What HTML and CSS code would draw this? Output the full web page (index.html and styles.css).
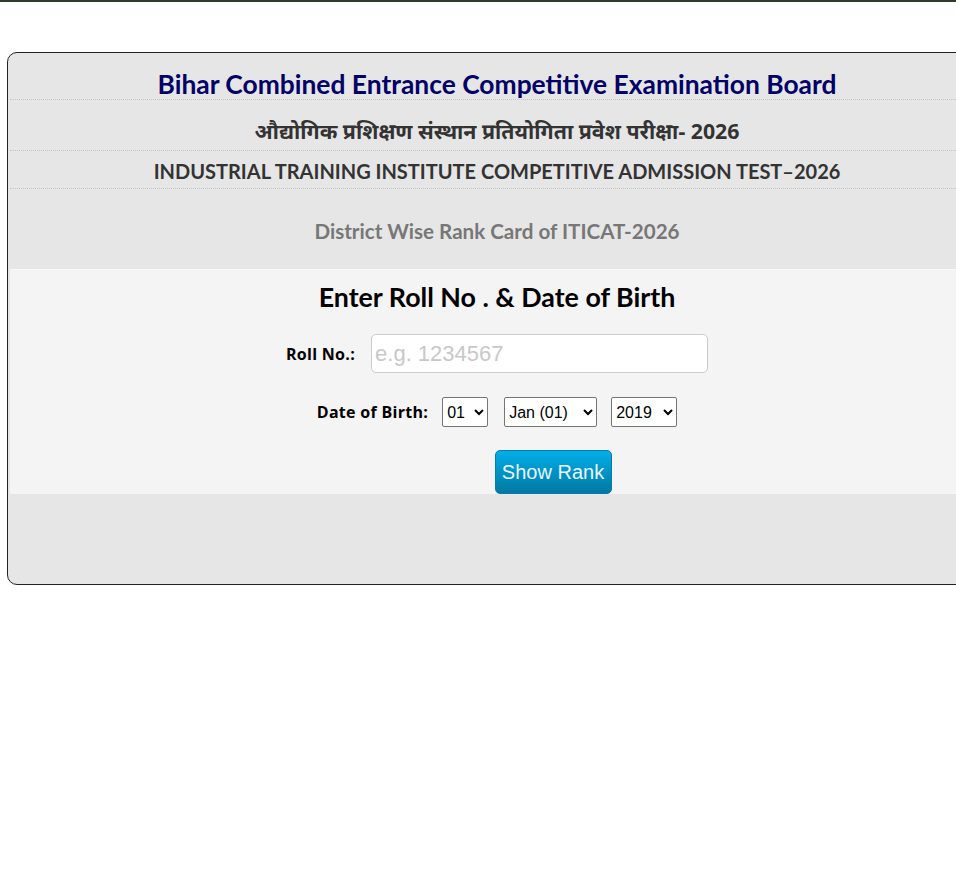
FILE: index.html
```html
<!DOCTYPE html>
<html lang="en">
<head>
    <meta charset="UTF-8">
    <meta name="viewport" content="width=device-width, initial-scale=1.0">
    <title>ITICAT-2026 District Wise Rank Card</title>
    <link rel="stylesheet" href="styles.css">
</head>
<body>
    <div class="topbar"></div>

    <div class="card">
        <div class="title-row board">Bihar Combined Entrance Competitive Examination Board</div>
        <div class="title-row hindi">औद्योगिक प्रशिक्षण संस्थान प्रतियोगिता प्रवेश परीक्षा- 2026</div>
        <div class="title-row exam">INDUSTRIAL TRAINING INSTITUTE COMPETITIVE ADMISSION TEST–2026</div>
        <div class="title-row sub">District Wise Rank Card of ITICAT-2026</div>

        <div class="form-panel">
            <h2>Enter Roll No . &amp; Date of Birth</h2>

            <div class="form-row">
                <label for="rollNo">Roll No.:</label>
                <input type="text" id="rollNo" class="roll-input" placeholder="e.g. 1234567">
            </div>

            <div class="form-row dob-row">
                <label>Date of Birth:</label>
                <select class="sel sel-day">
                    <option>01</option>
                </select>
                <select class="sel sel-month">
                    <option>Jan (01)</option>
                </select>
                <select class="sel sel-year">
                    <option>2019</option>
                </select>
            </div>

            <div class="btn-row">
                <button class="btn-rank">Show Rank</button>
            </div>
        </div>
    </div>
</body>
</html>
```

FILE: styles.css
```css
body {
    margin: 0;
    padding: 0;
    background-color: #fff;
    font-family: Lato, 'Open Sans', sans-serif;
    overflow: hidden;
}
.topbar {
    height: 2px;
    background-color: #2e3c2b;
}
.card {
    box-sizing: border-box;
    width: 980px;
    margin: 50px 0 0 7px;
    border: 1px solid #222;
    border-radius: 10px;
    background-color: #e6e6e6;
    padding-bottom: 90px;
}
.title-row {
    text-align: center;
    font-weight: bold;
    border-bottom: 1px dotted #c4c4c4;
    margin: 0 2px;
}
.board {
    height: 46px;
    line-height: 62px;
    font-size: 26.4px;
    color: #000066;
}
.hindi {
    height: 50px;
    line-height: 62px;
    font-size: 21.3px;
    color: #333;
    font-family: 'Noto Sans', Lato, sans-serif;
}
.exam {
    height: 37px;
    line-height: 40px;
    font-size: 20px;
    color: #333;
}
.sub {
    height: 80px;
    line-height: 84px;
    font-size: 20.6px;
    color: #777;
    border-bottom: 1px solid #f8f8f8;
}
.form-panel {
    margin: 0 2px;
    background-color: #f4f4f4;
    text-align: center;
}
.form-panel h2 {
    margin: 0;
    padding-top: 11px;
    font-size: 26.8px;
    line-height: 32px;
    color: #000;
}
.form-row {
    display: flex;
    justify-content: center;
    align-items: center;
    gap: 14px;
    margin-top: 21px;
}
.form-row label {
    font-family: 'Open Sans', Lato, sans-serif;
    font-weight: bold;
    font-size: 16px;
    letter-spacing: 0.3px;
    color: #000;
}
.roll-input {
    box-sizing: border-box;
    width: 337px;
    height: 39px;
    margin-left: 2px;
    padding: 0 3px;
    border: 1px solid #ccc;
    border-radius: 5px;
    font-family: 'Liberation Sans', Arial, sans-serif;
    font-size: 22px;
}
.roll-input::placeholder {
    color: #c8c8c8;
}
.dob-row {
    margin-top: 24px;
}
.sel {
    box-sizing: border-box;
    height: 30px;
    border: 1px solid #767676;
    border-radius: 2px;
    background-color: #fff;
    font-family: 'Liberation Sans', Arial, sans-serif;
    font-size: 16px;
    color: #000;
}
.sel-day {
    width: 46px;
}
.sel-month {
    width: 93px;
    margin-left: 2px;
}
.sel-year {
    width: 66px;
}
.btn-row {
    padding-top: 23px;
}
.btn-rank {
    margin-left: 112px;
    width: 117px;
    height: 44px;
    border: 1px solid #0a7aa8;
    border-radius: 5px;
    background: linear-gradient(to bottom, #00aee8, #0078a2);
    color: #e8f6fb;
    font-family: 'Liberation Sans', Arial, sans-serif;
    font-size: 20px;
    cursor: pointer;
    vertical-align: bottom;
}
```
